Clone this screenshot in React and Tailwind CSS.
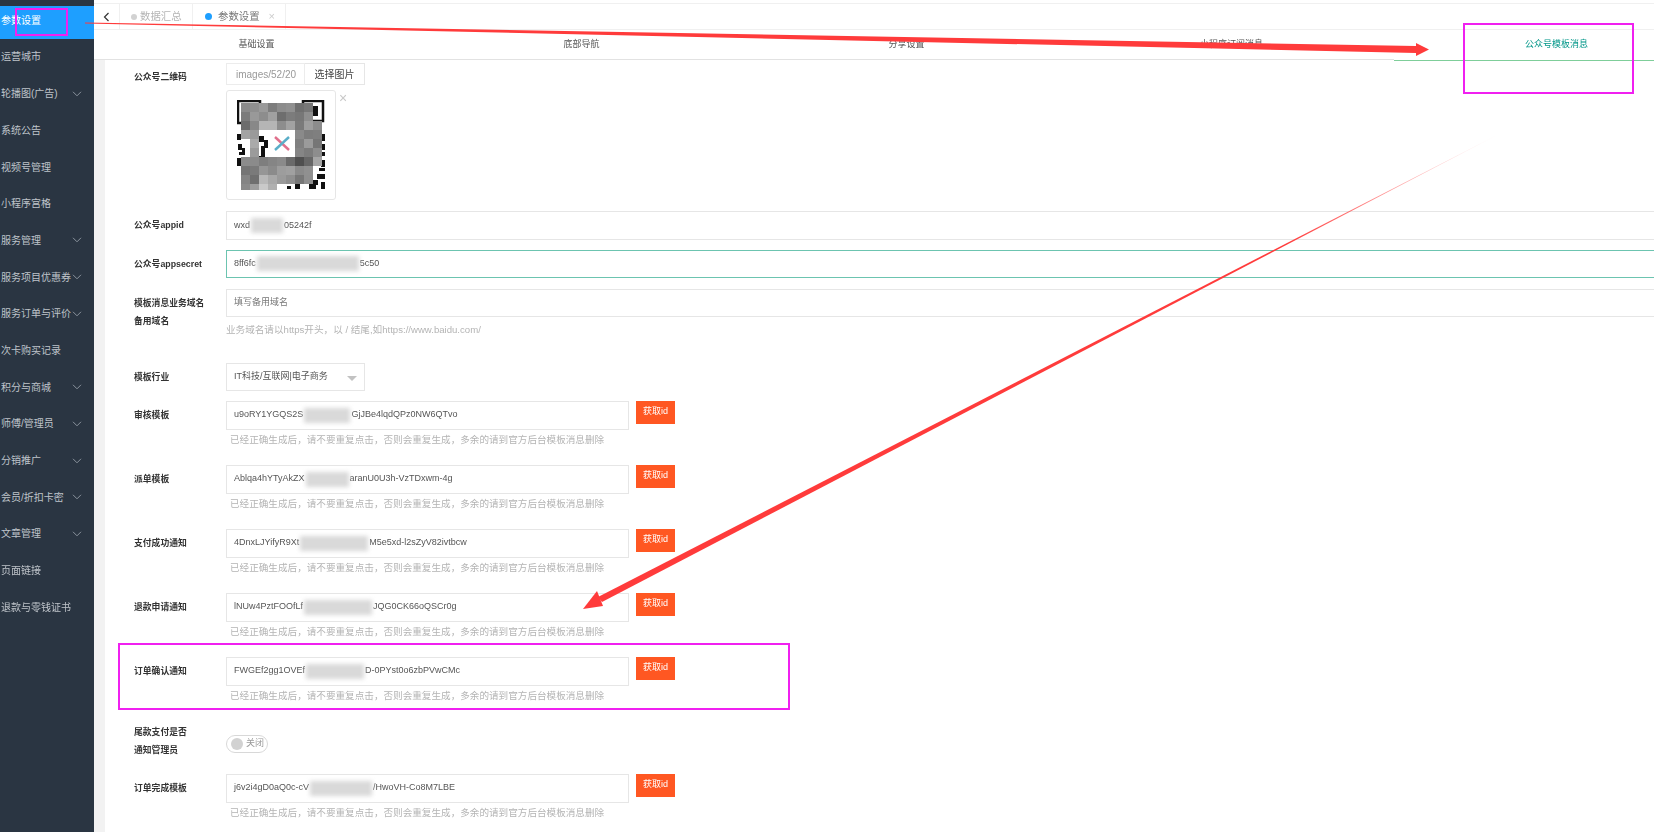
import React from "react";

const font = { fontFamily: '"Liberation Sans","Noto Sans CJK SC",sans-serif' };

const menu = [
  ["运营城市", false],
  ["轮播图(广告)", true],
  ["系统公告", false],
  ["视频号管理", false],
  ["小程序宫格", false],
  ["服务管理", true],
  ["服务项目优惠券", true],
  ["服务订单与评价", true],
  ["次卡购买记录", false],
  ["积分与商城", true],
  ["师傅/管理员", true],
  ["分销推广", true],
  ["会员/折扣卡密", true],
  ["文章管理", true],
  ["页面链接", false],
  ["退款与零钱证书", false],
];

const subTabs = ["基础设置", "底部导航", "分享设置", "小程序订阅消息"];

const templates = [
  ["审核模板", "u9oRY1YGQS2S", 46, "GjJBe4lqdQPz0NW6QTvo"],
  ["派单模板", "Ablqa4hYTyAkZX", 43, "aranU0U3h-VzTDxwm-4g"],
  ["支付成功通知", "4DnxLJYifyR9Xt", 68, "M5e5xd-l2sZyV82ivtbcw"],
  ["退款申请通知", "lNUw4PztFOOfLf", 68, "JQG0CK66oQSCr0g"],
  ["订单确认通知", "FWGEf2gg1OVEf", 58, "D-0PYst0o6zbPVwCMc"],
];

// blurred part of the qr, 9px cells, empty = the code shows through
const mosaic = [
  ["#8a8a8a", "#8f8f8f", "#9a9a9a", "#7d7d7d", "#8c8c8c", "#909090", "#6f6f6f", "#777777", "", ""],
  ["#7b7b7b", "#999999", "#8d8d8d", "#a0a0a0", "#6e6e6e", "#7c7c7c", "#777777", "#8e8e8e", "", ""],
  ["#6c6c6c", "#888888", "#b5b5b5", "#b5b5b5", "#8d8d8d", "#a2a2a2", "#7a7a7a", "#9e9e9e", "#8c8c8c", ""],
  ["#a3a3a3", "#9a9a9a", "", "", "", "", "#8a8a8a", "#7d7d7d", "#7f7f7f", ""],
  ["", "#aaaaaa", "", "", "", "", "#808080", "#9b9b9b", "#767676", ""],
  ["", "#9b9b9b", "", "", "", "", "#858585", "#7c7c7c", "#8d8d8d", ""],
  ["#8c8c8c", "#8b8b8b", "#7e7e7e", "#858585", "#8a8a8a", "#6a6a6a", "#4f4f4f", "#666666", "#a5a5a5", ""],
  ["#757575", "#7a7a7a", "#969696", "#8b8b8b", "#9d9d9d", "#a0a0a0", "#8a8a8a", "#909090", "", ""],
  ["#848484", "#6f6f6f", "#b8b8b8", "#a8a8a8", "#9a9a9a", "#8f8f8f", "#777777", "#8f8f8f", "", ""],
  ["#8a8a8a", "#9d9d9d", "#c9c9c9", "#b0b0b0", "", "", "", "", "", ""],
];

const qrBits = [
  [0, 34, 4, 6], [1, 44, 4, 6], [2, 52, 5, 3], [0, 58, 4, 8], [5, 48, 3, 7], [5, 66, 4, 4], [22, 36, 5, 6], [24, 46, 4, 14],
  [20, 56, 7, 4], [27, 40, 4, 8], [84, 34, 4, 7], [84, 44, 4, 6], [83, 52, 5, 4], [84, 60, 4, 7], [82, 68, 6, 3],
  [80, 74, 8, 5], [76, 80, 5, 5], [84, 82, 4, 7], [72, 84, 7, 5], [58, 84, 5, 5], [50, 86, 4, 3],
];

const QrCode = () => (
  <svg width="88" height="90" viewBox="0 0 88 90" className="block">
    <rect x="1" y="1" width="22" height="22" fill="none" stroke="#111" strokeWidth="2.5" />
    <rect x="66" y="1" width="20" height="20" fill="none" stroke="#111" strokeWidth="2.5" />
    <rect x="71" y="6" width="10" height="10" fill="#111" />
    {qrBits.map(([x, y, w, h], i) => (
      <rect key={i} x={x} y={y} width={w} height={h} fill="#111" />
    ))}
    {mosaic.map((row, r) =>
      row.map((c, i) =>
        c ? <rect key={r + "-" + i} x={4 + i * 9} y={3 + r * 9} width="9" height="9" fill={c} /> : null
      )
    )}
    <rect x="33" y="32" width="24" height="23" fill="#fff" />
    <path d="M38 37 L52 50" stroke="#e0708c" strokeWidth="2.4" />
    <path d="M52 37 L38 50" stroke="#5aaec8" strokeWidth="2.4" />
  </svg>
);

const Chevron = () => (
  <svg width="10" height="6" viewBox="0 0 10 6" fill="none" stroke="#8b949e" strokeWidth="1" className="shrink-0">
    <path d="M1 .8 L5 4.8 L9 .8" />
  </svg>
);

const Patch = ({ w }) => (
  <span
    className="inline-block h-[15px] mx-[1px] bg-[#d9d9d9] blur-[2px] shrink-0"
    style={{ width: w }}
  />
);

const Label = ({ children }) => (
  <div className="w-[92px] shrink-0 text-[8.8px] leading-[18px] font-bold text-[#333]">{children}</div>
);

const Help = ({ children }) => (
  <p className="pl-[4px] text-[9.6px] leading-[12px] text-[#b4b4b4] whitespace-nowrap">{children}</p>
);

const TemplateRow = ({ label, before, patch, after }) => (
  <div className="h-[64px]">
    <div className="flex items-start">
      <div className="h-[29px] flex items-center">
        <Label>{label}</Label>
      </div>
      <div className="w-[403px] h-[29px] px-[7px] flex items-center border border-[#e6e6e6] bg-white text-[9px] text-[#555] whitespace-nowrap overflow-hidden">
        {before}
        <Patch w={patch} />
        {after}
      </div>
      <button className="ml-[7px] w-[39px] h-[23px] bg-[#ff5722] text-white text-[9px]">获取id</button>
    </div>
    <div className="mt-[4px]">
      <div className="ml-[92px]">
        <Help>已经正确生成后，请不要重复点击，否则会重复生成，多余的请到官方后台模板消息删除</Help>
      </div>
    </div>
  </div>
);

export default function App() {
  return (
    <div className="relative w-[1654px] h-[832px] overflow-hidden bg-white" style={font}>
      <div className="flex h-full blur-[0.4px]">
        <aside className="w-[94px] shrink-0 bg-[#2a3542] pt-[6px] text-[10px] text-[#bfc4ca]">
          <div className="h-[32.6px] pb-[3px] pl-[1px] flex items-center bg-[#1e9fff] text-white">参数设置</div>
          {menu.map(([name, sub]) => (
            <div key={name} className="h-[36.7px] pl-[1px] pr-[12px] flex items-center justify-between whitespace-nowrap">
              <span>{name}</span>
              {sub && <Chevron />}
            </div>
          ))}
        </aside>

        <main className="flex-1 min-w-0 overflow-hidden">
          <div className="h-[30px] pt-[3px] border-b border-[#f0f0f0]">
            <div className="h-full flex border-t border-[#f0f0f0] text-[10.4px]">
              <div className="w-[26px] flex items-center justify-center border-r border-[#f0f0f0]">
                <svg width="7" height="10" viewBox="0 0 7 10" fill="none" stroke="#333" strokeWidth="1.2">
                  <path d="M5.5 1 L1.5 5 L5.5 9" />
                </svg>
              </div>
              <div className="w-[73px] flex items-center pl-[11px] gap-[3px] border-r border-[#f0f0f0] text-[#b5b5b5]">
                <span className="w-[6px] h-[6px] rounded-full bg-[#d2d2d2]" />
                数据汇总
              </div>
              <div className="w-[93px] flex items-center pl-[12px] gap-[6px] border-r border-[#f0f0f0] text-[#777]">
                <span className="w-[7px] h-[7px] rounded-full bg-[#1e9fff]" />
                参数设置
                <span className="ml-[3px] text-[11px] text-[#ccc]">×</span>
              </div>
            </div>
          </div>

          <div className="w-[1625px] h-[30px] flex text-[9px] text-[#555]">
            {subTabs.map((t) => (
              <div key={t} className="w-[325px] h-[30px] flex items-center justify-center border-b border-[#e2e2e2]">{t}</div>
            ))}
            <div className="relative z-10 w-[325px] h-[31px] pb-[1px] flex items-center justify-center text-[#009688] border-b border-[#7fce9a]">
              公众号模板消息
            </div>
          </div>

          <div className="flex h-[772px]">
            <div className="w-[11px] shrink-0 bg-[#f2f2f2]" />
            <section className="flex-1 pl-[29px] pt-[3px]">
              <div className="flex items-start">
                <div className="pt-[5px]"><Label>公众号二维码</Label></div>
                <div>
                  <div className="flex h-[22px] text-[10px]">
                    <div className="w-[79px] flex items-center pl-[9px] border border-[#ececec] text-[#999] overflow-hidden whitespace-nowrap">images/52/20</div>
                    <div className="w-[60px] flex items-center justify-center border border-l-0 border-[#e6e6e6] text-[#444]">选择图片</div>
                  </div>
                  <div className="relative mt-[5px] w-[110px] h-[110px] border border-[#e6e6e6] rounded-[3px] pl-[10px] pt-[9px]">
                    <QrCode />
                    <span className="absolute left-[112px] top-0 text-[14px] leading-[14px] text-[#c8c8c8]">×</span>
                  </div>
                </div>
              </div>

              <div className="mt-[11px] flex items-center">
                <Label>公众号appid</Label>
                <div className="w-[1500px] h-[28.5px] px-[7px] flex items-center border border-[#e6e6e6] text-[9px] text-[#555]">
                  wxd<Patch w={32} />05242f
                </div>
              </div>

              <div className="mt-[10.5px] flex items-center">
                <Label>公众号appsecret</Label>
                <div className="w-[1500px] h-[27.5px] px-[7px] flex items-center border border-[#6cc4b0] text-[9px] text-[#555]">
                  8ff6fc<Patch w={102} />5c50
                </div>
              </div>

              <div className="mt-[11.5px] flex items-start">
                <div className="pt-[5px]"><Label>模板消息业务域名<br />备用域名</Label></div>
                <div>
                  <div className="w-[1500px] h-[28px] px-[7px] flex items-center border border-[#e6e6e6] text-[9px] text-[#777]">填写备用域名</div>
                  <p className="mt-[7px] text-[9.6px] leading-[12px] text-[#b4b4b4] whitespace-nowrap">业务域名请以https开头，以 / 结尾,如https://www.baidu.com/</p>
                </div>
              </div>

              <div className="mt-[26.5px] flex items-center">
                <Label>模板行业</Label>
                <div className="relative w-[139px] h-[28px] pl-[7px] flex items-center border border-[#e6e6e6] text-[9px] text-[#555]">
                  IT科技/互联网|电子商务
                  <span className="absolute right-[7px] top-[12px] border-x-[5px] border-x-transparent border-t-[5px] border-t-[#c2c2c2]" />
                </div>
              </div>

              <div className="mt-[10px]">
                {templates.map(([label, before, patch, after]) => (
                  <TemplateRow key={label} label={label} before={before} patch={patch} after={after} />
                ))}
              </div>

              <div className="h-[53px] pb-[12px] flex items-center">
                <Label>尾款支付是否<br />通知管理员</Label>
                <div className="mt-[6px] w-[42px] h-[18px] pl-[4px] flex items-center gap-[3px] rounded-full border border-[#d8d8d8] text-[9px] text-[#999]">
                  <span className="w-[12px] h-[12px] rounded-full bg-[#d2d2d2]" />
                  关闭
                </div>
              </div>

              <TemplateRow label="订单完成模板" before="j6v2i4gD0aQ0c-cV" patch={62} after="/HwoVH-Co8M7LBE" />
            </section>
          </div>
        </main>
      </div>

      <svg className="absolute left-0 top-0 pointer-events-none" width="1654" height="832" viewBox="0 0 1654 832">
        <defs>
          <linearGradient id="fade" gradientUnits="userSpaceOnUse" x1="1503" y1="132" x2="1290" y2="250">
            <stop offset="0" stopColor="#ff3b3b" stopOpacity="0" />
            <stop offset="1" stopColor="#ff3b3b" stopOpacity="1" />
          </linearGradient>
        </defs>
        <polygon points="85,22.6 1416,46 1416,43 1429,49.5 1416,56 1416,53 85,23.4" fill="#ff3b3b" />
        <polygon points="1503,132 598,597 602,602 1503,132" fill="url(#fade)" />
        <polygon points="583,609 597,591 603,606" fill="#ff3b3b" />
      </svg>

      <div className="absolute left-[15px] top-[8px] w-[53px] h-[28px] border-2 border-[#f020f0]" />
      <div className="absolute left-[1463px] top-[23px] w-[171px] h-[71px] border-2 border-[#f020f0]" />
      <div className="absolute left-[118px] top-[643px] w-[672px] h-[67px] border-2 border-[#f020f0]" />
    </div>
  );
}
